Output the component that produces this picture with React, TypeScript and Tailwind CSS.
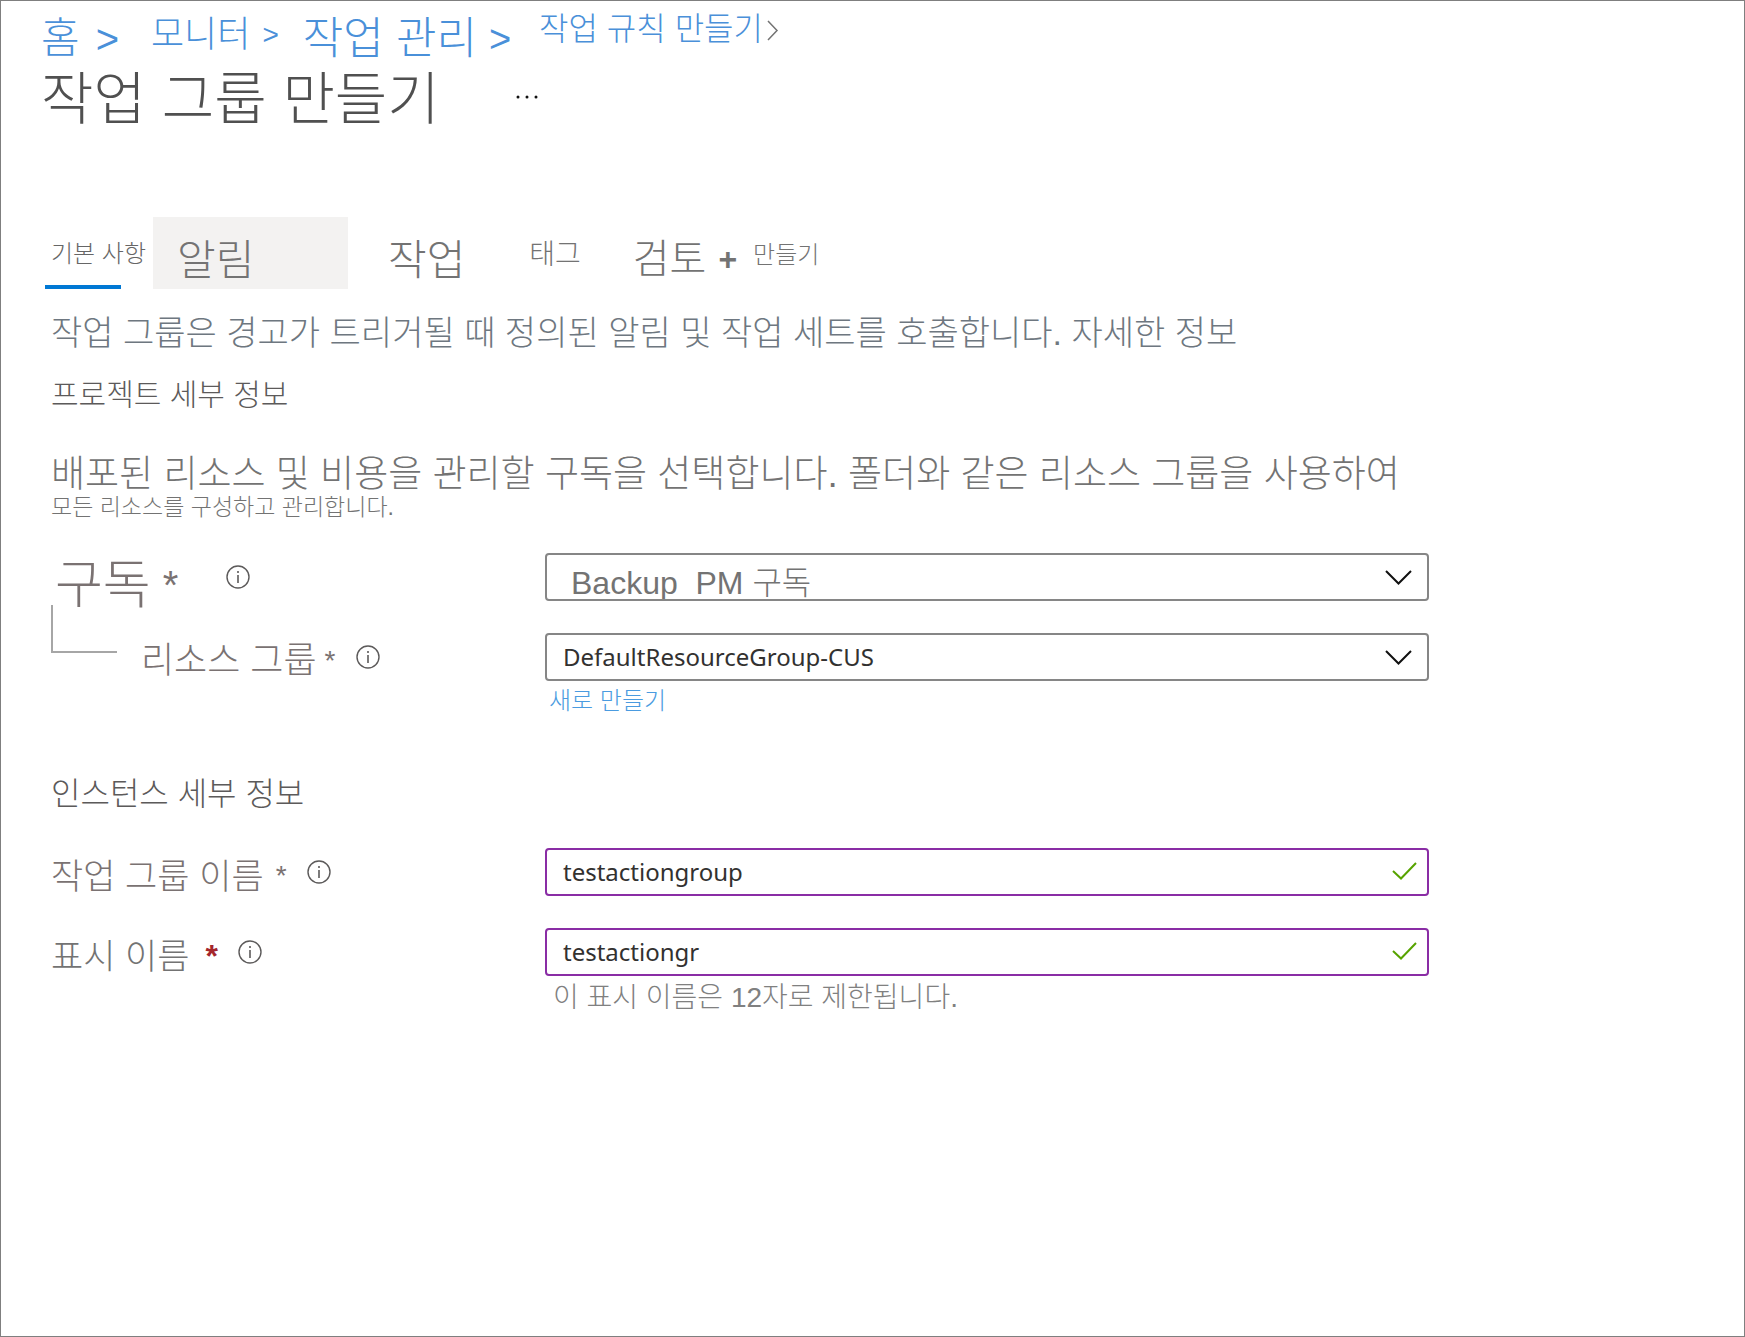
import { useState } from "react";
import type { ReactNode } from "react";

function InfoButton({ label }: { label: string }) {
  return (
    <button type="button" aria-label={label} className="shrink-0">
      <svg width="24" height="24" viewBox="0 0 24 24" fill="none">
        <circle cx="12" cy="12" r="11" stroke="#5c5a5a" strokeWidth="1.4" />
        <path d="M12 10v8" stroke="#5c5a5a" strokeWidth="1.6" />
        <path d="M12 6v2" stroke="#5c5a5a" strokeWidth="1.6" />
      </svg>
    </button>
  );
}

function SelectBox({
  id,
  className,
  children,
}: {
  id: string;
  className: string;
  children: ReactNode;
}) {
  return (
    <div className="relative">
      <select
        id={id}
        className={`block h-12 w-full appearance-none rounded border-2 border-[#868686] bg-white ${className}`}
      >
        {children}
      </select>
      <svg
        className="pointer-events-none absolute top-4 right-4"
        width="28"
        height="16"
        viewBox="0 0 28 16"
        fill="none"
      >
        <path d="M1 2l12.500 12.500L26 2" stroke="#111111" strokeWidth="2" />
      </svg>
    </div>
  );
}

function ValidInput({
  id,
  value,
  onChange,
}: {
  id: string;
  value: string;
  onChange: (value: string) => void;
}) {
  return (
    <div className="relative">
      <input
        id={id}
        type="text"
        value={value}
        onChange={(e) => onChange(e.target.value)}
        className="block h-12 w-full rounded border-2 border-[#8a2da5] bg-white pr-12 pb-0.5 pl-4 font-['Noto_Sans','Noto_Sans_CJK_KR',sans-serif] text-2xl font-normal text-[#323130] outline-none"
      />
      <svg
        className="pointer-events-none absolute top-3 right-3"
        width="26"
        height="22"
        viewBox="0 0 26 22"
        fill="none"
      >
        <path d="M2 11l8 7.500L25 3" stroke="#57a300" strokeWidth="2" />
      </svg>
    </div>
  );
}

export default function App() {
  const [groupName, setGroupName] = useState("testactiongroup");
  const [displayName, setDisplayName] = useState("testactiongr");

  return (
    <main className="min-h-screen border border-[#7f7f7f] bg-white px-10 pt-4 font-['Liberation_Sans','Noto_Sans_CJK_KR',sans-serif] font-light text-[#737373]">
      <nav className="flex h-10 items-start leading-none whitespace-nowrap text-[#4a90d9]">
        <a href="#home" className="text-[42px] leading-[44px]">홈</a>
        <span className="ml-4 text-[40px] leading-[44px]">&gt;</span>
        <a href="#monitor" className="ml-8 text-4xl leading-9">모니터</a>
        <span className="ml-3 text-[28px] leading-9">&gt;</span>
        <a href="#manage" className="ml-6 text-[44px] leading-none">작업 관리</a>
        <span className="ml-3 text-[38px] leading-[44px]">&gt;</span>
        <a href="#rule" className="ml-7 text-[32px] leading-6">작업 규칙 만들기</a>
        <svg className="ml-1" width="12" height="24" viewBox="0 0 12 24" fill="none">
          <path d="M1 4l9 9.500L1 23" stroke="#737373" strokeWidth="1.500" />
        </svg>
      </nav>

      <div className="mt-3 flex h-14 items-center gap-18">
        <h1 className="pt-1 text-[57px] leading-none font-light text-[#505050]">작업 그룹 만들기</h1>
        <button type="button" aria-label="더 보기">
          <svg width="26" height="4" viewBox="0 0 26 4" fill="#111111">
            <circle cx="6" cy="2" r="1.500" />
            <circle cx="15" cy="2" r="1.500" />
            <circle cx="24" cy="2" r="1.500" />
          </svg>
        </button>
      </div>

      <div role="tablist" className="mt-[92px] flex h-[72px] items-start pl-1 whitespace-nowrap">
        <button role="tab" aria-selected="true" className="flex h-full w-[76px] items-center border-b-4 border-[#0078d4] pt-1.5 pl-1.5 text-2xl leading-none text-[#666666]">
          기본 사항
        </button>
        <button role="tab" className="ml-8 h-full w-[195px] bg-[#f3f2f1] pt-4 pl-6 text-left text-[42px] leading-none">알림</button>
        <button role="tab" className="ml-10 h-full pt-4 text-[42px] leading-none">작업</button>
        <button role="tab" className="ml-16 h-full pt-1 text-[28px] leading-none">태그</button>
        <button role="tab" className="ml-13 flex h-full items-center pt-3 text-[40px] leading-none">
          검토 <span className="ml-3 text-[32px] leading-none font-bold">+</span>
          <span className="ml-4 pb-2 text-2xl leading-none">만들기</span>
        </button>
      </div>

      <section className="max-w-[1388px] pl-2.5">
        <p className="mt-6 text-[34px] leading-10 whitespace-nowrap text-[#6e7780]">
          작업 그룹은 경고가 트리거될 때 정의된 알림 및 작업 세트를 호출합니다. 자세한 정보
        </p>
        <h2 className="mt-5 text-[30px] leading-11 font-light text-[#5c5a5a]">프로젝트 세부 정보</h2>
        <p className="mt-[38px] text-[37px] leading-10 whitespace-nowrap">
          배포된 리소스 및 비용을 관리할 구독을 선택합니다. 폴더와 같은 리소스 그룹을 사용하여
        </p>
        <p className="text-[23px] leading-6">모든 리소스를 구성하고 관리합니다.</p>

        <div className="mt-[34px] grid grid-cols-[494px_1fr] gap-y-8">
          <div className="flex h-12 items-center text-[#7a7272]">
            <label htmlFor="subscription" className="flex items-center pt-4 pl-1 text-[52px] leading-none">
              구독<span className="ml-3 text-[40px] leading-none">*</span>
            </label>
            <span className="ml-12 flex">
              <InfoButton label="구독 정보" />
            </span>
          </div>
          <SelectBox id="subscription" className="pt-1 pl-6 text-[32px] text-[#737373]">
            <option>Backup&nbsp; PM 구독</option>
          </SelectBox>

          <div className="flex h-12 items-start text-[#7a7272]">
            <span className="-mt-7 h-12 w-[66px] shrink-0 border-b-2 border-l-2 border-[#a6a6a6]" />
            <div className="flex h-12 items-center pl-6">
              <label htmlFor="resource-group" className="flex items-center pt-2 text-4xl leading-none">
                리소스 그룹<span className="ml-2 text-[28px] leading-none">*</span>
              </label>
              <span className="ml-5 flex">
                <InfoButton label="리소스 그룹 정보" />
              </span>
            </div>
          </div>
          <div>
            <SelectBox
              id="resource-group"
              className="pl-4 font-['Noto_Sans','Noto_Sans_CJK_KR',sans-serif] text-2xl font-normal text-[#323130]"
            >
              <option>DefaultResourceGroup-CUS</option>
            </SelectBox>
            <a href="#new" className="mt-2 block pl-1 text-2xl leading-6 text-[#4a9be0]">새로 만들기</a>
          </div>
        </div>

        <h2 className="mt-[59px] text-[32px] leading-11 font-light text-[#5c5a5a]">인스턴스 세부 정보</h2>

        <div className="mt-8 grid grid-cols-[494px_1fr] gap-y-8">
          <div className="flex h-12 items-center">
            <label htmlFor="group-name" className="flex items-center pt-2 text-[35px] leading-none text-[#7a7272]">
              작업 그룹 이름<span className="ml-3 text-[28px] leading-none">*</span>
            </label>
            <span className="ml-5 flex">
              <InfoButton label="작업 그룹 이름 정보" />
            </span>
          </div>
          <ValidInput id="group-name" value={groupName} onChange={setGroupName} />

          <div className="flex h-12 items-center">
            <label htmlFor="display-name" className="flex items-center pt-2 text-[35px] leading-none">
              표시 이름<span className="ml-4 text-[32px] leading-none font-bold text-[#a4262c]">*</span>
            </label>
            <span className="ml-5 flex">
              <InfoButton label="표시 이름 정보" />
            </span>
          </div>
          <div>
            <ValidInput id="display-name" value={displayName} onChange={setDisplayName} />
            <p className="mt-0.5 pl-2 text-[28px] leading-10 text-[#808080]">이 표시 이름은 12자로 제한됩니다.</p>
          </div>
        </div>
      </section>
    </main>
  );
}
